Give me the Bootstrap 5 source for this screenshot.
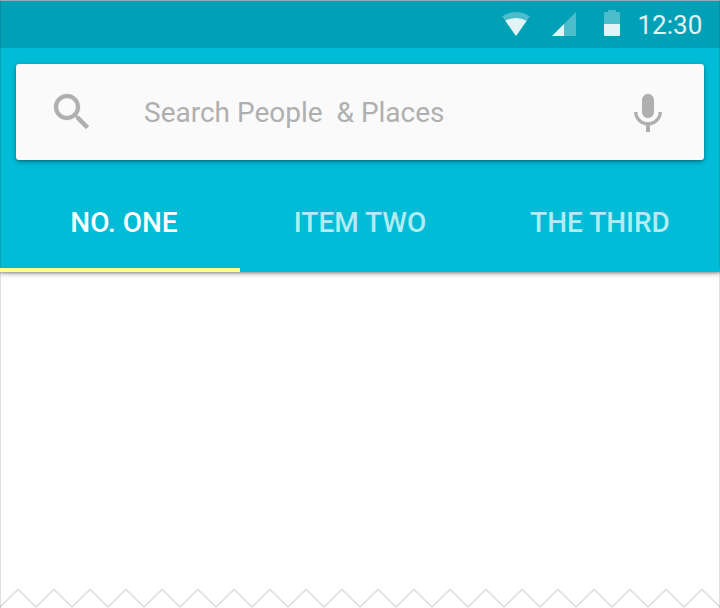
<!DOCTYPE html>
<html lang="en">
<head>
<meta charset="utf-8">
<meta name="viewport" content="width=device-width, initial-scale=1">
<title>Search People &amp; Places</title>
<link href="https://cdn.jsdelivr.net/npm/bootstrap@5.3.0/dist/css/bootstrap.min.css" rel="stylesheet">
<style>
  body { font-family: Roboto, "Liberation Sans", sans-serif; background: #fff; }
  .screen { width: 720px; height: 608px; }
  .app-header { background: #00bcd6; height: 272px; box-shadow: 0 1px 6px rgba(0,0,0,.3), 0 1px 3px rgba(0,0,0,.3); }
  .status-bar { background: #00a1b6; height: 48px; padding-right: 18px; color: #e3f4f7; }
  .status-bar svg { display: block; }
  .wifi { margin-right: 22px; }
  .signal { margin-right: 28px; }
  .battery { margin-right: 17.5px; }
  .clock { font-size: 26px; line-height: 50px; height: 48px; width: 64.5px; white-space: nowrap; }
  .search-box { height: 96px; margin: 16px 16px 0; background: #fafafa; border-radius: 3px; box-shadow: 0 2px 5px rgba(0,0,0,.3), 0 1px 2px rgba(0,0,0,.2); padding: 0 32px; }
  .search-box svg { fill: #afafaf; flex: none; }
  .search-box input { font-size: 28px; line-height: 48px; height: 48px; margin: 2px 0 0 48px; color: #afafaf; }
  .search-box input::placeholder { color: #afafaf; opacity: 1; }
  .tabs { margin-top: 12px; height: 100px; }
  .tabs .nav-link { flex: 0 0 240px; height: 100px; padding: 0; border-radius: 0; color: #b2ebf2; font-size: 28px; font-weight: 500; line-height: 102px; }
  .tabs .nav-link.active { color: #fff; text-indent: 8px; box-shadow: inset 0 -4px #ffff8d; }
  .frame { z-index: 1; border: solid rgba(0,0,0,.12); border-width: 0 1px; height: 608px; -webkit-mask: linear-gradient(#000 268px, transparent 268px 272px, #000 272px); mask: linear-gradient(#000 268px, transparent 268px 272px, #000 272px); }
  .top-line { z-index: 2; height: 1px; background: #8fb0b6; }
</style>
</head>
<body>
<div class="screen d-flex flex-column position-relative overflow-hidden">
  <header class="app-header flex-shrink-0">
    <div class="status-bar d-flex align-items-start justify-content-end">
      <svg class="wifi" width="28" height="48" viewBox="502 0 28 48" aria-hidden="true">
        <path d="M502 16.2Q516 7.6 530 16.2L516 36Z" fill="#fff" opacity=".3"/>
        <path d="M505.3 20.7Q516 15.2 526.7 20.7L516 36Z" fill="#e3f4f7"/>
      </svg>
      <svg class="signal" width="24" height="48" viewBox="552 0 24 48" aria-hidden="true">
        <path d="M552 36L576 12V36Z" fill="#fff" opacity=".3"/>
        <path d="M552 36L564 24V36Z" fill="#e3f4f7"/>
      </svg>
      <svg class="battery" width="16" height="48" viewBox="604 0 16 48" aria-hidden="true">
        <path d="M604 24V13.2Q604 12 605.2 12H608V10H616V12H618.8Q620 12 620 13.2V24Z" fill="#fff" opacity=".3"/>
        <path d="M604 24H620V34.8Q620 36 618.8 36H605.2Q604 36 604 34.8Z" fill="#e3f4f7"/>
      </svg>
      <span class="clock">12:30</span>
    </div>
    <form class="search-box d-flex align-items-center">
      <svg width="48" height="48" viewBox="0 0 24 24" aria-hidden="true"><path d="M15.5 14h-.79l-.28-.27C15.41 12.59 16 11.11 16 9.5 16 5.91 13.09 3 9.5 3S3 5.91 3 9.5 5.91 16 9.5 16c1.61 0 3.09-.59 4.23-1.57l.27.28v.79l5 4.99L20.49 19l-4.99-5zm-6 0C7.01 14 5 11.99 5 9.5S7.01 5 9.5 5 14 7.01 14 9.5 11.99 14 9.5 14z" stroke="#afafaf" stroke-width=".15"/></svg>
      <input class="border-0 bg-transparent p-0 flex-grow-1 shadow-none" type="text" placeholder="Search People  &amp; Places" aria-label="Search">
      <svg width="48" height="48" viewBox="0 -1 24 24" aria-hidden="true"><path d="M12 14c1.66 0 3-1.34 3-3V5c0-1.66-1.34-3-3-3S9 3.34 9 5v6c0 1.66 1.34 3 3 3zm5.3-3c0 3-2.54 5.1-5.3 5.1S6.7 14 6.7 11H5c0 3.41 2.72 6.23 6 6.72V21h2v-3.28c3.28-.48 6-3.3 6-6.72h-1.7z"/></svg>
    </form>
    <nav class="tabs nav nav-justified flex-nowrap">
      <a class="nav-link active" href="#">NO. ONE</a>
      <a class="nav-link" href="#">ITEM TWO</a>
      <a class="nav-link" href="#">THE THIRD</a>
    </nav>
  </header>
  <main class="flex-grow-1"></main>
  <svg class="d-block flex-shrink-0" width="720" height="20" viewBox="0 0 720 20" aria-hidden="true">
    <defs><pattern id="zigzag" width="36" height="20" patternUnits="userSpaceOnUse"><path d="M-2 17L0 19L18 1.5L36 19L38 17" fill="none" stroke="#e0e0e0" stroke-width="1.7"/></pattern></defs>
    <rect width="720" height="20" fill="url(#zigzag)"/>
  </svg>
  <div class="frame position-absolute top-0 start-0 w-100 pe-none"></div>
  <div class="top-line position-absolute top-0 start-0 w-100"></div>
</div>
<script src="https://cdn.jsdelivr.net/npm/bootstrap@5.3.0/dist/js/bootstrap.bundle.min.js"></script>
</body>
</html>
